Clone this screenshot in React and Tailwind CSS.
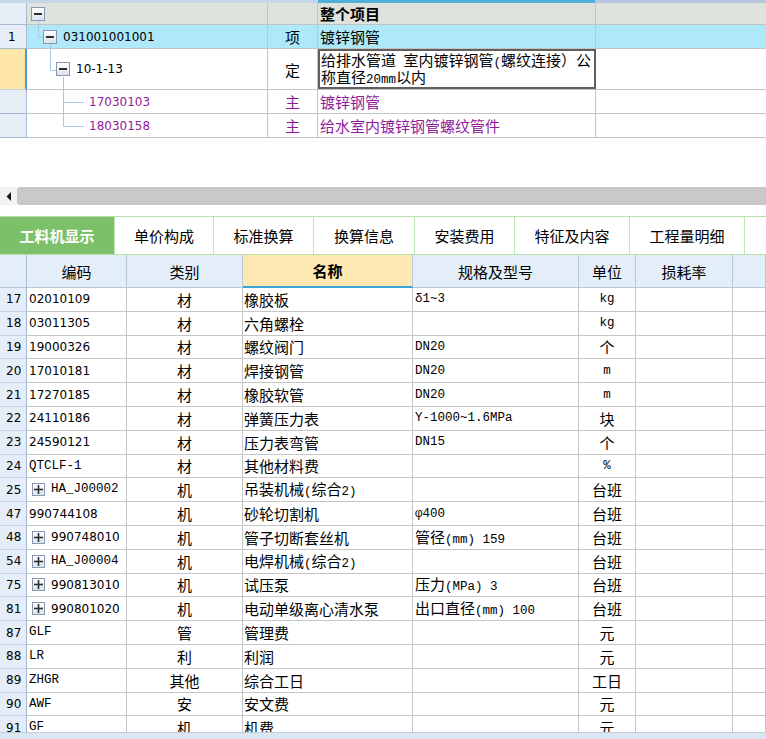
import React from "react";

const CJK = /([\u2E80-\u9FFF\uFF00-\uFFEF\u3000-\u303F]+)/;

function Mixed({ text }) {
  const parts = text.split(CJK).filter((p) => p !== "");
  return (
    <span className="inline-flex items-baseline whitespace-nowrap">
      {parts.map((p, i) =>
        CJK.test(p) ? (
          <span key={i} className="font-['Noto_Sans_CJK_SC',sans-serif] text-[15px] leading-[17px]">
            {p}
          </span>
        ) : (
          <span key={i} className="font-['Liberation_Mono',monospace] text-[12.5px] leading-[14px] whitespace-pre">
            {p}
          </span>
        )
      )}
    </span>
  );
}

function MinusBox() {
  return (
    <div className="w-[14px] h-[14px] shrink-0 border border-[#8797b2] bg-gradient-to-b from-white to-[#dce3ec] flex items-center justify-center">
      <div className="w-[8px] h-[2px] bg-[#2e2e2e]" />
    </div>
  );
}

function PlusBox() {
  return (
    <div className="w-[13px] h-[13px] shrink-0 border border-[#8797b2] bg-gradient-to-b from-white to-[#dce3ec] flex items-center justify-center">
      <svg width="9" height="9" viewBox="0 0 9 9">
        <rect x="0" y="3.7" width="9" height="1.6" fill="#2e2e2e" />
        <rect x="3.7" y="0" width="1.6" height="9" fill="#2e2e2e" />
      </svg>
    </div>
  );
}

const purple = "text-[#8f1c9b]";

function TopGrid() {
  const cellB = "border-r border-b border-[#c3c3c3]";
  return (
    <div className="flex flex-col">
      <div className="flex h-[3px]">
        <div className="w-[318px] bg-[#c5d5ea]" />
        <div className="w-[277px] bg-[#4fb0dc]" />
        <div className="flex-1 bg-[#b8c7dd]" />
      </div>
      <div className="flex h-[22px] bg-[#dee3de]">
        <div className="w-[27px] bg-[#e7eef8] border-r border-b border-[#a9b9d1]" />
        <div className={`w-[241px] ${cellB} flex items-center pl-[4px]`}>
          <MinusBox />
        </div>
        <div className={`w-[50px] ${cellB}`} />
        <div className={`w-[278px] ${cellB} flex items-center pl-[2px] leading-none`}>
          <span className="font-['Noto_Sans_CJK_SC',sans-serif] text-[15px] font-bold">整个项目</span>
        </div>
        <div className="flex-1 border-b border-[#c3c3c3]" />
      </div>
      <div className="flex h-[24px] bg-[#afe8f9] text-black">
        <div className="w-[27px] bg-[#e7eef8] border-r border-b border-[#a9b9d1] flex items-center pl-[8px] font-['DejaVu_Sans',sans-serif] text-[12px]">
          1
        </div>
        <div className={`w-[241px] ${cellB} flex items-center pl-[16px] gap-[6px]`}>
          <MinusBox />
          <span className="font-['DejaVu_Sans',sans-serif] text-[12px]">031001001001</span>
        </div>
        <div className={`w-[50px] ${cellB} flex items-center justify-center`}>
          <Mixed text="项" />
        </div>
        <div className={`w-[278px] ${cellB} flex items-center pl-[2px]`}>
          <Mixed text="镀锌钢管" />
        </div>
        <div className="flex-1 border-b border-[#c3c3c3]" />
      </div>
      <div className="flex h-[41px] bg-white">
        <div className="w-[27px] bg-[#fde6a7] border-r-2 border-r-[#4a9fd8] border-b border-b-[#c9d3e2]" />
        <div className={`w-[241px] ${cellB} flex items-center pl-[29px] gap-[6px]`}>
          <MinusBox />
          <span className="font-['DejaVu_Sans',sans-serif] text-[12px]">10-1-13</span>
        </div>
        <div className={`w-[50px] ${cellB} flex items-center justify-center`}>
          <Mixed text="定" />
        </div>
        <div className="w-[278px] border-b border-[#c3c3c3]">
          <div className="h-full border-2 border-[#5f5f5f] pl-[1px] pt-[1px] flex flex-col">
            <div className="h-[17px] flex items-center">
              <Mixed text="给排水管道 室内镀锌钢管(螺纹连接）公" />
            </div>
            <div className="h-[17px] flex items-center">
              <Mixed text="称直径20mm以内" />
            </div>
          </div>
        </div>
        <div className="flex-1 border-b border-[#c3c3c3]" />
      </div>
      {[
        ["17030103", "镀锌钢管"],
        ["18030158", "给水室内镀锌钢管螺纹管件"],
      ].map(([code, name]) => (
        <div key={code} className="flex h-[24px] bg-white">
          <div className="w-[27px] bg-[#e7eef8] border-r border-b border-[#a9b9d1]" />
          <div className={`w-[241px] ${cellB} flex items-center pl-[62px] ${purple}`}>
            <span className="font-['DejaVu_Sans',sans-serif] text-[12px]">{code}</span>
          </div>
          <div className={`w-[50px] ${cellB} flex items-center justify-center ${purple}`}>
            <Mixed text="主" />
          </div>
          <div className={`w-[278px] ${cellB} flex items-center pl-[2px] ${purple}`}>
            <Mixed text={name} />
          </div>
          <div className="flex-1 border-b border-[#c3c3c3]" />
        </div>
      ))}
    </div>
  );
}

const tabs = [
  ["工料机显示", "w-[115px]"],
  ["单价构成", "w-[99px]"],
  ["标准换算", "w-[100px]"],
  ["换算信息", "w-[101px]"],
  ["安装费用", "w-[100px]"],
  ["特征及内容", "w-[115px]"],
  ["工程量明细", "w-[115px]"],
  ["人材机汇总", "w-[110px]"],
];

const rows = [
  ["17", "02010109", "材", "橡胶板", "δ1~3", "kg"],
  ["18", "03011305", "材", "六角螺栓", "", "kg"],
  ["19", "19000326", "材", "螺纹阀门", "DN20", "个"],
  ["20", "17010181", "材", "焊接钢管", "DN20", "m"],
  ["21", "17270185", "材", "橡胶软管", "DN20", "m"],
  ["22", "24110186", "材", "弹簧压力表", "Y-1000~1.6MPa", "块"],
  ["23", "24590121", "材", "压力表弯管", "DN15", "个"],
  ["24", "QTCLF-1", "材", "其他材料费", "", "%"],
  ["25", "HA_J00002", "机", "吊装机械(综合2)", "", "台班", true],
  ["47", "990744108", "机", "砂轮切割机", "φ400", "台班"],
  ["48", "990748010", "机", "管子切断套丝机", "管径(mm) 159", "台班", true],
  ["54", "HA_J00004", "机", "电焊机械(综合2)", "", "台班", true],
  ["75", "990813010", "机", "试压泵", "压力(MPa) 3", "台班", true],
  ["81", "990801020", "机", "电动单级离心清水泵", "出口直径(mm) 100", "台班", true],
  ["87", "GLF", "管", "管理费", "", "元"],
  ["88", "LR", "利", "利润", "", "元"],
  ["89", "ZHGR", "其他", "综合工日", "", "工日"],
  ["90", "AWF", "安", "安文费", "", "元"],
  ["91", "GF", "机", "机费", "", "元"],
];

function LowerTable() {
  const hc = "border-r border-b border-[#b6c6dc] bg-[#e4eef9] flex items-center justify-center";
  const dc = "border-r border-b border-[#c6c6c6] flex items-center overflow-hidden whitespace-nowrap";
  return (
    <div className="flex flex-col flex-1 min-h-0">
      <div className="flex h-[33px] shrink-0">
        <div className={`w-[27px] ${hc} border-r-[#a9b9d1]`} />
        <div className={`w-[100px] ${hc}`}><Mixed text="编码" /></div>
        <div className={`w-[116px] ${hc}`}><Mixed text="类别" /></div>
        <div className="w-[170px] border-r border-[#b6c6dc] border-b-2 border-b-[#3aa7dc] bg-[#fde8b1] flex items-center justify-center">
          <span className="font-['Noto_Sans_CJK_SC',sans-serif] text-[15px] font-bold leading-none">名称</span>
        </div>
        <div className={`w-[166px] ${hc}`}><Mixed text="规格及型号" /></div>
        <div className={`w-[57px] ${hc}`}><Mixed text="单位" /></div>
        <div className={`w-[97px] ${hc}`}><Mixed text="损耗率" /></div>
        <div className={`flex-1 ${hc}`} />
      </div>
      <div className="flex-1 min-h-0 overflow-hidden flex flex-col">
        {rows.map(([n, code, type, name, spec, unit, plus]) => {
          const hasLetters = /[A-Z]/.test(code);
          return (
            <div key={n} className="flex h-[23.8px] shrink-0 text-black">
              <div className="w-[27px] shrink-0 bg-[#e4edf8] border-r border-b border-r-[#a4b7cf] border-b-[#c8d3e3] flex items-center pl-[6px] font-['DejaVu_Sans',sans-serif] text-[12px]">
                {n}
              </div>
              <div className={`w-[100px] shrink-0 ${dc} ${plus ? "pl-[5px] gap-[6px]" : "pl-[2px]"}`}>
                {plus && <PlusBox />}
                {hasLetters ? (
                  <span className="font-['Liberation_Mono',monospace] text-[12.5px]">{code}</span>
                ) : (
                  <span className="font-['DejaVu_Sans',sans-serif] text-[12px]">{code}</span>
                )}
              </div>
              <div className={`w-[116px] shrink-0 ${dc} justify-center`}>
                <Mixed text={type} />
              </div>
              <div className={`w-[170px] shrink-0 ${dc} pl-[1px]`}>
                <Mixed text={name} />
              </div>
              <div className={`w-[166px] shrink-0 ${dc} pl-[2px]`}>
                <Mixed text={spec} />
              </div>
              <div className={`w-[57px] shrink-0 ${dc} justify-center`}>
                <Mixed text={unit} />
              </div>
              <div className={`w-[97px] shrink-0 ${dc}`} />
              <div className={`flex-1 ${dc}`} />
            </div>
          );
        })}
      </div>
      <div className="h-[7px] shrink-0 bg-[#dde7f3] border-t border-[#c0cee0]" />
    </div>
  );
}

export default function App() {
  return (
    <div className="relative w-[766px] h-[739px] overflow-hidden bg-white flex flex-col text-black font-['DejaVu_Sans','Noto_Sans_CJK_SC',sans-serif]">
      <TopGrid />
      <svg className="absolute left-0 top-0 pointer-events-none" width="100" height="140">
        <g stroke="#a9c7e6" strokeWidth="1" fill="none">
          <path d="M38.5 21 V37.5 H43" />
          <path d="M50.5 44 V70.5 H56" />
          <path d="M63.5 77 V126.5 H84" />
          <path d="M63.5 102.5 H84" />
        </g>
      </svg>
      <div className="h-[49px] shrink-0" />
      <div className="flex h-[18px] shrink-0">
        <div className="w-[17px] bg-[#f3f3f3] flex items-center justify-center">
          <svg width="6" height="9" viewBox="0 0 6 9">
            <polygon points="5,0 5,9 0.5,4.5" fill="#1a1a1a" />
          </svg>
        </div>
        <div className="flex-1 bg-[#c9c9c9] rounded-l-[3px]" />
      </div>
      <div className="h-[11px] shrink-0" />
      <div className="flex h-[39px] shrink-0 border-t border-b border-[#b7e0a7] overflow-hidden">
        {tabs.map(([t, w], i) => (
          <div
            key={t}
            className={`${w} shrink-0 flex items-center border-r border-[#c4e6b6] ${
              i === 0 ? "bg-[#7cc06a] text-white" : "bg-white text-black"
            } ${i === 7 ? "justify-start pl-[20px]" : "justify-center"}`}
          >
            <span className={`font-['Noto_Sans_CJK_SC',sans-serif] text-[15px] leading-none ${i === 0 ? "font-bold" : ""}`}>{t}</span>
          </div>
        ))}
      </div>
      <LowerTable />
    </div>
  );
}
